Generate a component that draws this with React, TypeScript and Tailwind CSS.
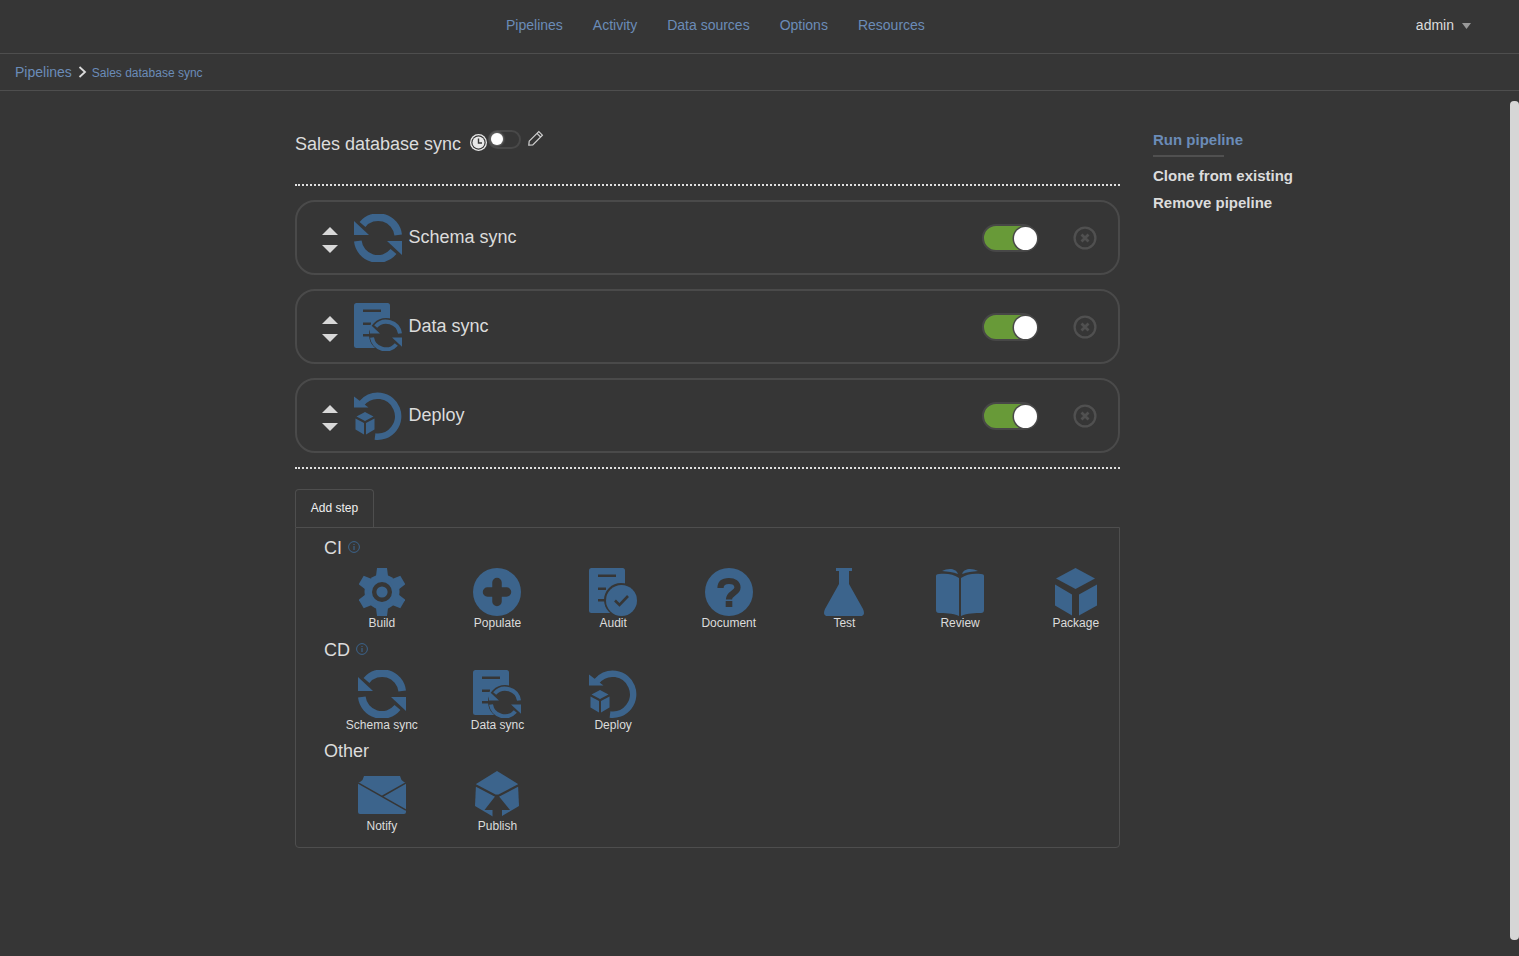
import React from "react";

const BLUE = "#3c648c";
const BG = "#363636";

function SyncShape({ thin = false }: { thin?: boolean }) {
  const sw = thin ? 6 : 7.6;
  const r = thin ? 21 : 20.2;
  const a = thin ? 3 : 3.8;
  return (
    <g>
      <path d={`M8.5 10.5A${r} ${r} 0 0 1 ${48 - a} 21`} fill="none" stroke={BLUE} strokeWidth={sw} />
      <path d={`M39.5 37.5A${r} ${r} 0 0 1 ${a} 27`} fill="none" stroke={BLUE} strokeWidth={sw} />
      <path d="M0 7V21H15Z" fill={BLUE} />
      <path d="M48 41V27H33Z" fill={BLUE} />
    </g>
  );
}

function Doc() {
  return (
    <g>
      <rect x="0" y="0" width="36" height="45" rx="2.5" fill={BLUE} />
      <rect x="9" y="6.5" width="18" height="2.5" fill={BG} />
      <rect x="9" y="19.5" width="8" height="2.5" fill={BG} />
      <rect x="9" y="31" width="8" height="2.5" fill={BG} />
    </g>
  );
}

function Cube() {
  return (
    <g fill={BLUE}>
      <path d="M20.5 0 40 10.5 20.5 21 1 10.5Z" />
      <path d="M0 16.5 17 26.5V47.5L0 37.5Z" />
      <path d="M42 16.5 24 26.5V47.5L42 37.5Z" />
    </g>
  );
}

const Svg = ({ children, w = 48, h = 48 }: { children: React.ReactNode; w?: number; h?: number }) => (
  <svg width={w} height={h} viewBox={`0 0 ${w} ${h}`} className="block shrink-0">
    {children}
  </svg>
);

const SchemaIcon = () => (
  <Svg>
    <SyncShape />
  </Svg>
);

const DataIcon = () => (
  <Svg>
    <Doc />
    <circle cx="32" cy="32" r="17" fill={BG} />
    <g transform="translate(16 16.5) scale(0.667)">
      <SyncShape thin />
    </g>
  </Svg>
);

const DeployIcon = () => (
  <Svg>
    <path d="M7.5 11.5A20.5 20.5 0 1 1 21 44.5" fill="none" stroke={BLUE} strokeWidth="6.5" />
    <path d="M0 4.5V15.5H14.5Z" fill={BLUE} />
    <path d="M11 20 19.5 24.5 11 29 2.5 24.5Z" fill={BLUE} />
    <path d="M1.5 26.5 10 31V42.5L1.5 37.5Z" fill={BLUE} />
    <path d="M20.5 26.5 12 31V42.5L20.5 37.5Z" fill={BLUE} />
  </Svg>
);

const BuildIcon = () => (
  <Svg w={46}>
    <g fill={BLUE}>
      <circle cx="23" cy="24" r="17.5" />
      {[0, 60, 120, 180, 240, 300].map((a) => (
        <path key={a} d="M18 0H28L29.5 12H16.5Z" transform={`rotate(${a} 23 24)`} />
      ))}
    </g>
    <circle cx="23" cy="24" r="7.8" fill="none" stroke={BG} strokeWidth="4.4" />
  </Svg>
);

const PopulateIcon = () => (
  <Svg>
    <circle cx="24" cy="24" r="24" fill={BLUE} />
    <path d="M24 14.5V33.5M14.5 24H33.5" stroke={BG} strokeWidth="9.5" strokeLinecap="round" />
  </Svg>
);

const AuditIcon = () => (
  <Svg>
    <Doc />
    <circle cx="32" cy="32" r="17" fill={BG} />
    <circle cx="32.5" cy="32.5" r="15.5" fill={BLUE} />
    <path d="M26 32.5 30.5 37 39 28" fill="none" stroke={BG} strokeWidth="2.6" />
  </Svg>
);

const DocumentIcon = () => (
  <Svg>
    <circle cx="24" cy="24" r="24" fill={BLUE} />
    <path d="M15.5 20C15.5 14.5 19.5 13 24 13C29 13 32.5 15.5 32.5 19.5C32.5 25 24 25 24 31.5" fill="none" stroke={BG} strokeWidth="6.2" />
    <rect x="20.7" y="33" width="6.6" height="6" fill={BG} />
  </Svg>
);

const TestIcon = () => (
  <Svg w={40}>
    <path fill={BLUE} d="M12 0H28V3H25V16L39 41Q42 48 36 48H4Q-2 48 1 41L15 16V3H12Z" />
  </Svg>
);

const ReviewIcon = () => (
  <Svg>
    <g fill={BLUE}>
      <path d="M0 8Q0 6 3 6C10 5 18 6 23 10V48C17 45 8 45 3 45Q0 45 0 42Z" />
      <path d="M48 8Q48 6 45 6C38 5 30 6 25 10V48C31 45 40 45 45 45Q48 45 48 42Z" />
      <path d="M6 3C12 0 20 0 22 6C17 4 12 3.5 6 3Z" />
      <path d="M42 3C36 0 28 0 26 6C31 4 36 3.5 42 3Z" />
    </g>
  </Svg>
);

const PackageIcon = () => (
  <Svg w={42}>
    <Cube />
  </Svg>
);

const NotifyIcon = () => (
  <Svg h={38}>
    <path fill={BLUE} d="M6 0H42L43.5 4 46 6Q48 6 48 8.5V36Q48 38 46 38H2Q0 38 0 36V8Q0 6 2 6L4.5 4Z" />
    <path d="M0 7 48 34M48 7 24 20.5" stroke={BG} strokeWidth="1.5" fill="none" />
  </Svg>
);

const PublishIcon = () => (
  <Svg w={44}>
    <path fill={BLUE} d="M22 0 43 13 44 35 22 48 0 35 1 13Z" />
    <path d="M0 14 22 25.5 44 14" fill="none" stroke={BG} strokeWidth="2.2" />
    <path fill={BG} d="M22 23 35 39H27V48H17.5V39H9.5Z" />
  </Svg>
);

const Info = () => (
  <svg width="12" height="12" viewBox="0 0 12 12" className="block">
    <circle cx="6" cy="6" r="5.4" fill="none" stroke={BLUE} strokeWidth="1" />
    <path d="M6 5V9M6 3V4.1" stroke={BLUE} strokeWidth="1.1" />
  </svg>
);

const Toggle = () => (
  <div className="relative -ml-[1px] mt-[1px] h-[28px] w-[55px] rounded-full border-2 border-[#474747] bg-[#689a38]">
    <div className="absolute -right-[2px] top-[0.5px] h-[23px] w-[23px] rounded-full bg-white shadow-[0_0_0_1.5px_#484848]" />
  </div>
);

const Remove = () => (
  <svg width="24" height="24" viewBox="0 0 24 24" className="block">
    <circle cx="12" cy="12" r="10.4" fill="none" stroke="#505050" strokeWidth="2.3" />
    <path d="M8.5 8.5 15.5 15.5M15.5 8.5 8.5 15.5" stroke="#505050" strokeWidth="2.8" />
  </svg>
);

const Sorter = () => (
  <svg width="16" height="26" viewBox="0 0 16 26" className="mt-[5px] block">
    <path d="M8 0 16 8H0Z" fill="#d8d8d8" />
    <path d="M8 26 16 18H0Z" fill="#d8d8d8" />
  </svg>
);

const Step = ({ icon, name }: { icon: React.ReactNode; name: string }) => (
  <div className="mb-[14px] flex h-[75px] items-center rounded-[20px] border-2 border-[#4a4a4a] pl-[25px] pr-[21px]">
    <Sorter />
    <div className="ml-[16px] w-[54.5px]">{icon}</div>
    <span className="-mt-[2px] text-[18px] leading-none text-[#dcdcdc]">{name}</span>
    <div className="ml-auto mr-[36px]">
      <Toggle />
    </div>
    <Remove />
  </div>
);

const Tile = ({ icon, label }: { icon: React.ReactNode; label: string }) => (
  <div className="flex w-[115.67px] shrink-0 flex-col items-center">
    <div className="flex h-[48px] items-center justify-center">{icon}</div>
    <div className="h-[14px] whitespace-nowrap text-[12px] leading-[14px] text-[#dcdcdc]">{label}</div>
  </div>
);

const Section = ({
  title,
  info,
  tall = true,
  children,
}: {
  title: string;
  info?: boolean;
  tall?: boolean;
  children: React.ReactNode;
}) => (
  <div className={tall ? "h-[102px]" : "h-[101px]"}>
    <div className="flex h-[30px] items-center gap-[6px] pl-[28px] text-[18px] text-[#dcdcdc]">
      <span>{title}</span>
      {info && (
        <span className="-mt-[3px]">
          <Info />
        </span>
      )}
    </div>
    <div className="mt-[5px] flex pl-[28px]">{children}</div>
  </div>
);

export default function App() {
  return (
    <div
      className="relative h-[956px] overflow-hidden bg-[#363636]"
      style={{ fontFamily: '"Liberation Sans", Arial, sans-serif' }}
    >
      <header className="flex h-[54px] items-center border-b border-[#4e4e4e] pb-[2px] pl-[506px] pr-[48px] text-[14px] text-[#6b8cb8]">
        <nav className="flex gap-[30px]">
          <span>Pipelines</span>
          <span>Activity</span>
          <span>Data sources</span>
          <span>Options</span>
          <span>Resources</span>
        </nav>
        <div className="ml-auto flex items-center gap-[8px] text-[#dcdcdc]">
          <span>admin</span>
          <svg width="9" height="6" viewBox="0 0 9 6" className="block">
            <path d="M0 0H9L4.5 6Z" fill="#999999" />
          </svg>
        </div>
      </header>

      <div className="flex h-[37px] items-center border-b border-[#4e4e4e] pl-[15px] text-[#6b8cb8]">
        <span className="text-[14px]">Pipelines</span>
        <svg width="9" height="12" viewBox="0 0 9 12" className="ml-[6px] mr-[5px] block">
          <path d="M1.5 1 7 6 1.5 11" fill="none" stroke="#dcdcdc" strokeWidth="1.8" />
        </svg>
        <span className="mt-[2px] text-[12px]">Sales database sync</span>
      </div>

      <main className="flex pl-[295px] pt-[36px]">
        <div className="w-[825px]">
          <div className="flex h-[59px] border-b-2 border-dotted border-[#e0e0e0]">
            <span className="mt-[5px] h-[24px] text-[18px] leading-[24px] text-[#dcdcdc]">Sales database sync</span>
            <svg width="17" height="17" viewBox="0 0 17 17" className="ml-[9px] mt-[7px] block">
              <circle cx="8.5" cy="8.5" r="8.5" fill="#e8e8e8" />
              <circle cx="8.5" cy="8.5" r="7.2" fill={BG} />
              <circle cx="8.5" cy="8.5" r="6" fill="#e8e8e8" />
              <path d="M8.5 4.5V9H12" fill="none" stroke={BG} strokeWidth="1.4" />
            </svg>
            <div className="relative ml-[1px] mt-[3px] h-[19px] w-[33px] rounded-full border-2 border-[#484848]">
              <div className="absolute left-[1px] top-[1px] h-[12px] w-[12px] rounded-full bg-white shadow-[0_0_3px_#bbbbbb]" />
            </div>
            <svg width="16" height="16" viewBox="0 0 16 16" className="ml-[7px] mt-[3px] block">
              <path d="M1.2 11.2 10.8 1.6 14.4 5.2 4.8 14.8 0.8 15.2Z M9 3.4 12.6 7" fill="none" stroke="#d0d0d0" strokeWidth="1.2" />
            </svg>
          </div>

          <div className="mt-[14px]">
            <Step icon={<SchemaIcon />} name="Schema sync" />
            <Step icon={<DataIcon />} name="Data sync" />
            <Step icon={<DeployIcon />} name="Deploy" />
          </div>

          <div className="border-b-2 border-dotted border-[#e0e0e0]" />

          <div className="mt-[20px] flex h-[38px] w-[79px] items-center justify-center rounded-t border border-b-0 border-[#4e4e4e] pb-[2px] text-[12px] text-[#f0f0f0]">
            Add step
          </div>
          <div className="h-[321px] rounded-b border border-[#4e4e4e] pt-[5px]">
            <Section title="CI" info>
              <Tile icon={<BuildIcon />} label="Build" />
              <Tile icon={<PopulateIcon />} label="Populate" />
              <Tile icon={<AuditIcon />} label="Audit" />
              <Tile icon={<DocumentIcon />} label="Document" />
              <Tile icon={<TestIcon />} label="Test" />
              <Tile icon={<ReviewIcon />} label="Review" />
              <Tile icon={<PackageIcon />} label="Package" />
            </Section>
            <Section title="CD" info tall={false}>
              <Tile icon={<SchemaIcon />} label="Schema sync" />
              <Tile icon={<DataIcon />} label="Data sync" />
              <Tile icon={<DeployIcon />} label="Deploy" />
            </Section>
            <Section title="Other">
              <Tile icon={<NotifyIcon />} label="Notify" />
              <Tile icon={<PublishIcon />} label="Publish" />
            </Section>
          </div>
        </div>

        <aside className="ml-[33px] pt-[3px] text-[15px] font-bold text-[#dcdcdc]">
          <div className="h-[27px] w-[71px] whitespace-nowrap border-b-2 border-[#505050] leading-[20px] text-[#6b8cb8]">
            Run pipeline
          </div>
          <div className="mt-[9px] leading-[20px]">Clone from existing</div>
          <div className="mt-[7px] leading-[20px]">Remove pipeline</div>
        </aside>
      </main>

      <div className="absolute bottom-[16px] right-0 top-[101px] w-[9px] rounded-[4px] bg-[#d6d6d6]" />
    </div>
  );
}
